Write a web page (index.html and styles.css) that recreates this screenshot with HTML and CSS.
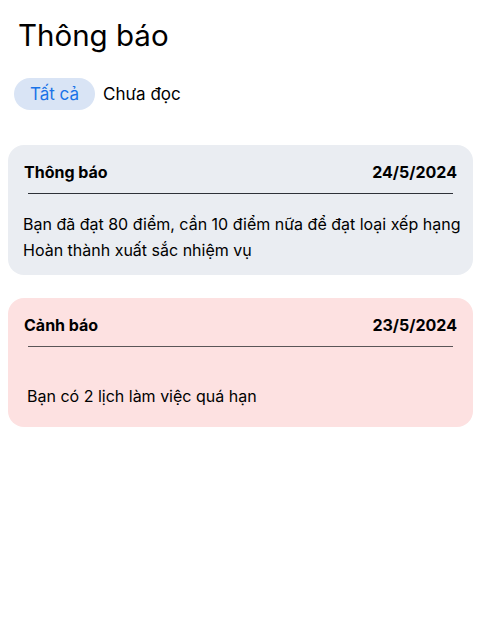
FILE: index.html
```html
<!DOCTYPE html>
<html lang="vi">
<head>
<meta charset="utf-8">
<link rel="stylesheet" href="styles.css">
</head>
<body>
<div class="page">
  <h1 class="title">Thông báo</h1>
  <div class="tabs">
    <span class="tab active">Tất cả</span>
    <span class="tab">Chưa đọc</span>
  </div>
  <div class="list">
    <div class="card info">
      <div class="card-head">
        <span class="card-title">Thông báo</span>
        <span class="card-date">24/5/2024</span>
      </div>
      <div class="divider"></div>
      <p class="card-body">Bạn đã đạt 80 điểm, cần 10 điểm nữa để đạt loại xếp hạng Hoàn thành xuất sắc nhiệm vụ</p>
    </div>
    <div class="card warn">
      <div class="card-head">
        <span class="card-title">Cảnh báo</span>
        <span class="card-date">23/5/2024</span>
      </div>
      <div class="divider"></div>
      <p class="card-body warn-body">Bạn có 2 lịch làm việc quá hạn</p>
    </div>
  </div>
</div>
</body>
</html>
```
FILE: styles.css
```css
html, body {
  margin: 0;
  padding: 0;
  background: #ffffff;
}
body {
  font-family: Inter, "Noto Sans", sans-serif;
  color: #000;
}
.page {
  width: 465px;
  padding: 0 18px 0 8px;
}
.title {
  margin: 0;
  padding: 17px 0 0 10px;
  font-size: 29.5px;
  font-weight: 400;
  line-height: 36px;
}
.tabs {
  display: flex;
  align-items: center;
  gap: 8px;
  margin: 25px 0 0 6px;
}
.tab {
  font-size: 17px;
  line-height: 32px;
  height: 32px;
}
.tab.active {
  background: #d9e4f5;
  color: #1a73e8;
  border-radius: 16px;
  padding: 0 16px;
}
.list {
  display: flex;
  flex-direction: column;
  gap: 23px;
  margin-top: 35px;
}
.card {
  box-sizing: border-box;
  border-radius: 16px;
  padding: 16px 15px 0 16px;
}
.info {
  background: #eaedf2;
  height: 130px;
}
.warn {
  background: #fde1e1;
  height: 129px;
}
.card-head {
  display: flex;
  justify-content: space-between;
  align-items: center;
  font-size: 16px;
  font-weight: 700;
  line-height: 22px;
  padding-right: 1px;
}
.divider {
  margin: 10px 5px 0 4px;
  height: 1px;
  background: #2e3138;
}
.warn .divider {
  background: #5a5557;
}
.card-body {
  margin: 17px -12px 0 -1px;
  font-size: 16px;
  line-height: 26px;
}
.warn-body {
  margin: 36px 0 0 3px;
}
```
